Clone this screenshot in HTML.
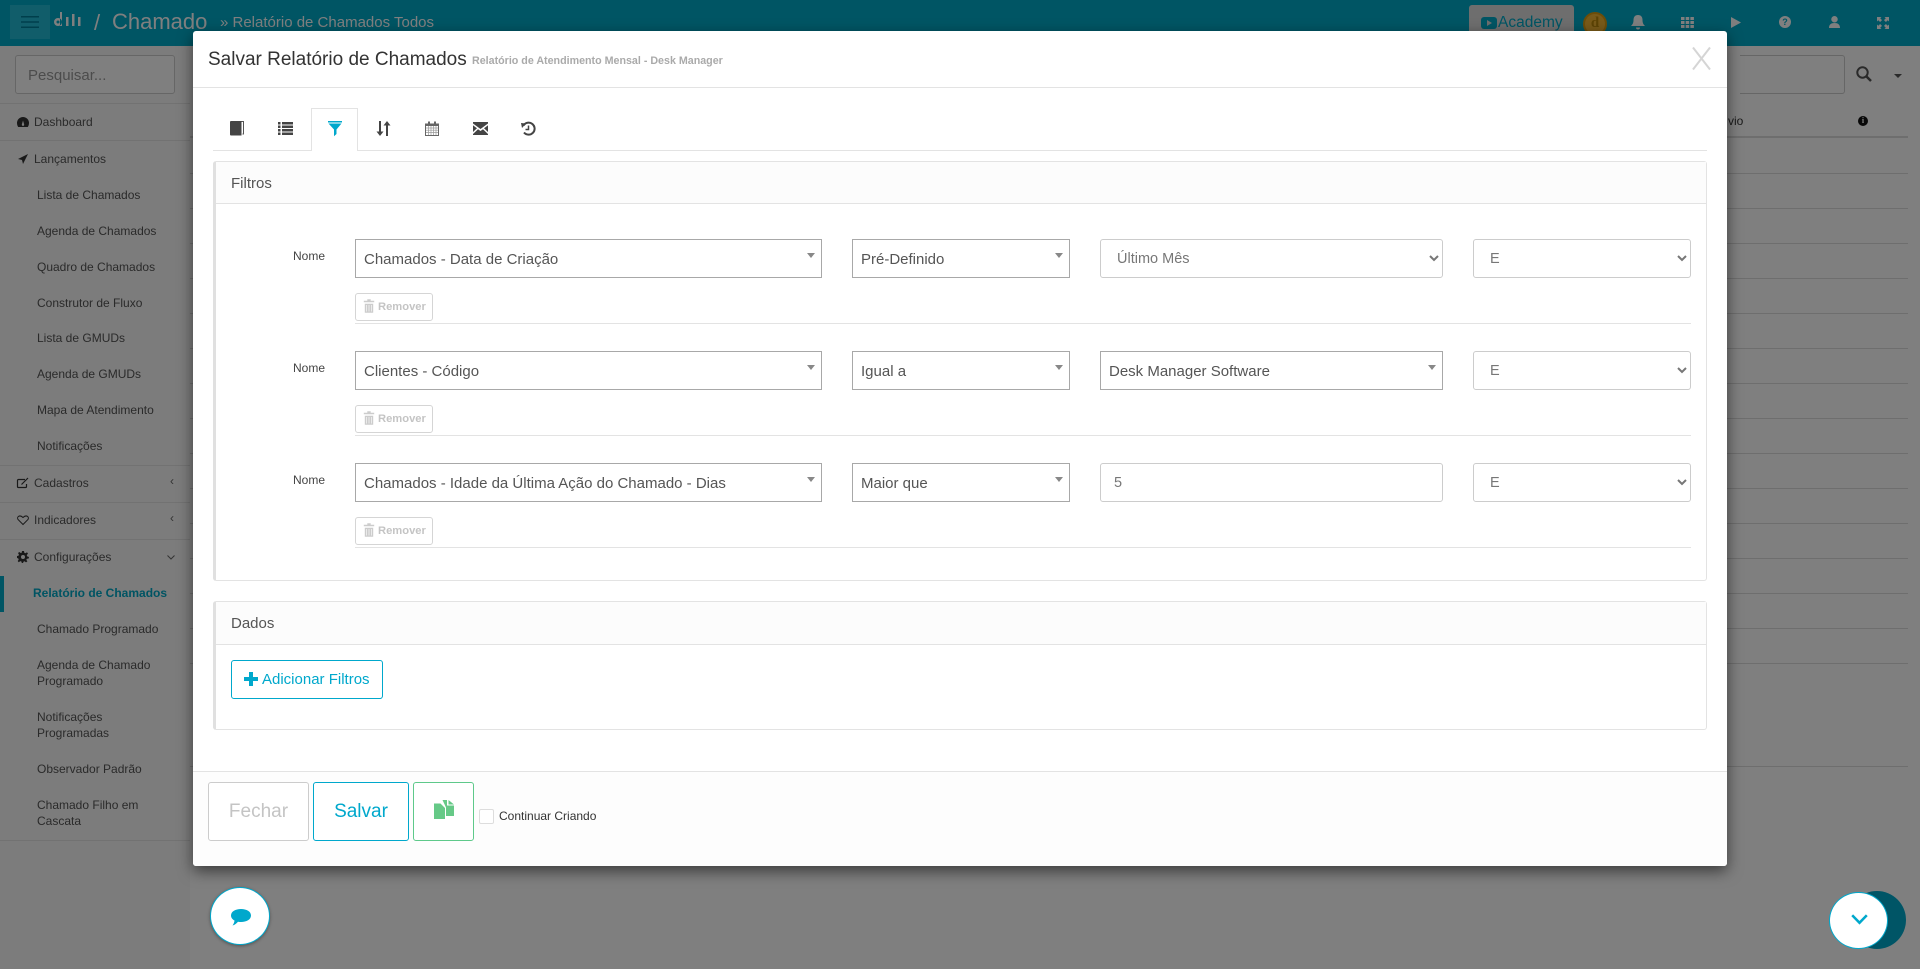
<!DOCTYPE html>
<html lang="pt-BR"><head><meta charset="utf-8"><title>Salvar Relatório de Chamados</title>
<style>
*{box-sizing:border-box}
html,body{margin:0;padding:0;width:1920px;height:969px;overflow:hidden;background:#fff;font-family:"Liberation Sans",sans-serif;color:#444}
.a{position:absolute}
svg{display:block;overflow:visible}
#hd{left:0;top:0;width:1920px;height:46px;background:#00abc9}
#side{left:0;top:46px;width:190px;height:923px;background:#f8f8f8}
.s{position:absolute;font-size:12px;line-height:16px;color:#555;white-space:nowrap}
.sub{left:37px}.top{left:34px}
.dv{position:absolute;left:0;width:190px;height:1px;background:#e4e4e4}
.rw{position:absolute;left:190px;width:1718px;height:1px;background:#ddd}
#ov{left:0;top:0;width:1920px;height:969px;background:rgba(0,0,0,.5)}
#m{left:193px;top:31px;width:1534px;height:835px;background:#fff;border-radius:3px;box-shadow:0 5px 15px rgba(0,0,0,.55)}
.ln{position:absolute;height:1px;background:#e3e3e3}
.pn{position:absolute;background:#fff;border:1px solid #e3e3e3;border-left:3px solid #e0e0e0;border-radius:3px}
.ph{position:absolute;left:0;top:0;right:0;height:42px;background:#fcfcfc;border-bottom:1px solid #e3e3e3;font-size:15px;line-height:43px;padding-left:15px;color:#555}
.nome{position:absolute;left:100px;font-size:12px;color:#444;line-height:16px}
.f{position:absolute;height:39px;background:#fff;border:1px solid #a8a8a8;font-size:15px;line-height:40px;color:#555;padding-left:8px;white-space:nowrap}
.f:after{content:"";position:absolute;right:6px;top:13px;border-left:4px solid transparent;border-right:4px solid transparent;border-top:5px solid #888}
select.n,.i{position:absolute;height:39px;background:#fff;border:1px solid #ccc;border-radius:3px;font:14.5px "Liberation Sans",sans-serif;color:#777}
select.n{padding-left:12px}
.i{padding-left:13px;line-height:37px}
.rm{position:absolute;left:162px;width:78px;height:28px;border:1px solid #d5d5d5;border-radius:3px;color:#c4c4c4;font-size:11.2px;font-weight:bold;line-height:27px;padding-left:22px;background:#fff}
.rm svg{position:absolute;left:7px;top:5px}
.b{position:absolute;top:751px;height:59px;border-radius:3px;background:#fff;font-size:19px;line-height:58px;text-align:center}
</style></head><body>

<div class="a" id="hd"></div>
<div class="a" style="left:10px;top:5px;width:40px;height:34px;background:#22bad5"></div>
<svg class="a" style="left:21px;top:15px" width="18" height="14"><path d="M0 1h18v1.500H0zM0 6.300h18v1.500H0zM0 11.500h18v1.500H0z" fill="#007e98"/></svg>
<svg class="a" style="left:54px;top:11px" width="28" height="20"><path d="M0 11a4 4 0 1 0 8 0a4 4 0 0 0-8 0zM2.500 11a1.500 1.500 0 1 1 3 0a1.500 1.500 0 0 1-3 0zM6 1h2v14H6zM12 6h2.500v9H12zM18 3h2.500v12H18zM24 6h2.500v9H24z" fill="#fff" fill-rule="evenodd"/></svg>
<div class="a" style="left:94px;top:9px;font-size:22px;line-height:28px;color:#fff">/</div>
<div class="a" style="left:112px;top:7px;font-size:22px;line-height:30px;color:#fff">Chamado</div>
<div class="a" style="left:220px;top:12px;font-size:15px;line-height:22px;color:#fff">» Relatório de Chamados Todos</div>
<div class="a" style="left:1469px;top:5px;width:105px;height:36px;background:#ddd;border-radius:3px 3px 0 0"></div>
<svg class="a" style="left:1481px;top:17px" width="16" height="12"><rect width="16" height="12" rx="3" fill="#00abc9"/><path d="M6 3l5 3l-5 3z" fill="#ddd"/></svg>
<div class="a" style="left:1498px;top:12px;font-size:15.5px;line-height:22px;color:#00abc9">Academy</div>
<div class="a" style="left:1583px;top:12px;width:24px;height:24px;border-radius:50%;background:#f0b432;border:2px solid #d99a10;color:#b8860b;font:bold 15px/19px 'Liberation Serif',serif;text-align:center">d</div>
<svg class="a" style="left:1631px;top:15px" width="14" height="15"><path d="M7 0c3 0 4.500 2 4.500 5c0 3 1 4.500 2.500 6H0c1.500-1.500 2.500-3 2.500-6C2.500 2 4 0 7 0zM5 12.500h4a2 2 0 0 1-4 0z" fill="#fff"/></svg>
<svg class="a" style="left:1681px;top:17px" width="13" height="11"><path d="M0 0h3.500v3H0zM4.700 0h3.500v3H4.700zM9.400 0h3.500v3H9.400zM0 4h3.500v3H0zM4.700 4h3.500v3H4.700zM9.400 4h3.500v3H9.400zM0 8h3.500v3H0zM4.700 8h3.500v3H4.700zM9.400 8h3.500v3H9.400z" fill="#fff"/></svg>
<svg class="a" style="left:1731px;top:17px" width="11" height="12"><path d="M0 0l10 5.500L0 11z" fill="#fff"/></svg>
<div class="a" style="left:1779px;top:16px;width:12px;height:12px;border-radius:50%;background:#fff;color:#00abc9;font:bold 9px/12px 'Liberation Sans',sans-serif;text-align:center">?</div>
<svg class="a" style="left:1829px;top:16px" width="11" height="13"><path d="M5.500 0a3.200 3.200 0 0 1 0 6.500a3.200 3.200 0 0 1 0-6.500zM0 12c0-3.500 2-5 5.500-5s5.500 1.500 5.500 5z" fill="#fff"/></svg>
<svg class="a" style="left:1877px;top:17px" width="12" height="12"><path d="M0 0h4.500L3.200 1.300L5 3.100L3.100 5L1.300 3.200L0 4.500zM12 0v4.500l-1.300-1.300L8.900 5L7 3.100l1.800-1.800L7.500 0zM0 12V7.500l1.300 1.300L3.100 7L5 8.900l-1.800 1.800L4.500 12zM12 12H7.500l1.300-1.300L7 8.900L8.900 7l1.800 1.800L12 7.500z" fill="#fff"/></svg>

<div class="a" id="side"></div>
<div class="a" style="left:15px;top:55px;width:160px;height:39px;background:#fff;border:1px solid #ccc;border-radius:3px;font-size:15px;line-height:39px;padding-left:12px;color:#999">Pesquisar...</div>
<div class="dv" style="top:103px"></div><div class="dv" style="top:140px"></div><div class="dv" style="top:465px"></div><div class="dv" style="top:502px"></div><div class="dv" style="top:539px"></div><div class="dv" style="top:840px"></div>
<svg class="a" style="left:17px;top:117px" width="12" height="10"><path d="M6 0a6 6 0 0 1 6 6c0 1.500-.5 3-1.200 4H1.200C.5 9 0 7.500 0 6a6 6 0 0 1 6-6zM6 3.500L5 7a1.200 1.200 0 1 0 2 0z" fill="#333" fill-rule="evenodd"/></svg>
<div class="s top" style="top:114px">Dashboard</div>
<svg class="a" style="left:18px;top:154px" width="10" height="10"><path d="M10 0L5 10L4 6L0 5z" fill="#333"/></svg>
<div class="s top" style="top:151px">Lançamentos</div>
<div class="s sub" style="top:187px">Lista de Chamados</div>
<div class="s sub" style="top:223px">Agenda de Chamados</div>
<div class="s sub" style="top:259px">Quadro de Chamados</div>
<div class="s sub" style="top:295px">Construtor de Fluxo</div>
<div class="s sub" style="top:330px">Lista de GMUDs</div>
<div class="s sub" style="top:366px">Agenda de GMUDs</div>
<div class="s sub" style="top:402px">Mapa de Atendimento</div>
<div class="s sub" style="top:438px">Notificações</div>
<svg class="a" style="left:17px;top:478px" width="12" height="10"><path d="M8 1.500H1.500a1 1 0 0 0-1 1v6a1 1 0 0 0 1 1h7a1 1 0 0 0 1-1V6M4.500 6.500L11 0" fill="none" stroke="#333" stroke-width="1.200"/></svg>
<div class="s top" style="top:475px">Cadastros</div>
<div class="s" style="left:170px;top:473px;color:#666">‹</div>
<svg class="a" style="left:17px;top:515px" width="12" height="10"><path d="M6 9.500L1 4.500C-.5 2 2.500-.8 6 2.500C9.500-.8 12.500 2 11 4.500z" fill="none" stroke="#333"/></svg>
<div class="s top" style="top:512px">Indicadores</div>
<div class="s" style="left:170px;top:510px;color:#666">‹</div>
<svg class="a" style="left:17px;top:551px" width="12" height="12"><path d="M5 0h2l.3 1.700l1.300.5L10 1.200L11 2.700l-1.200 1.200l.2 1.300L12 6l-.3 1.500l-1.800.2l-.6 1.200L10.400 10.300L9 11.400l-1.400-1.100l-1 .3L6 12H4.800l-.4-1.500l-1.200-.4L1.800 11.200L.7 10l1-1.400l-.5-1.200L0 7V5l1.500-.3l.4-1.200L1 2l1.400-1L3.700 2l1-.3zM6 4a2 2 0 1 0 0 4a2 2 0 0 0 0-4z" fill="#333" fill-rule="evenodd"/></svg>
<div class="s top" style="top:549px">Configurações</div>
<svg class="a" style="left:167px;top:555px" width="8" height="5"><path d="M.5.500L4 4L7.500.500" fill="none" stroke="#666"/></svg>
<div class="a" style="left:0;top:576px;width:4px;height:36px;background:#00abc9"></div>
<div class="s" style="left:33px;top:585px;font-weight:bold;color:#00a8c6">Relatório de Chamados</div>
<div class="s sub" style="top:621px">Chamado Programado</div>
<div class="s sub" style="top:657px">Agenda de Chamado<br>Programado</div>
<div class="s sub" style="top:709px">Notificações<br>Programadas</div>
<div class="s sub" style="top:761px">Observador Padrão</div>
<div class="s sub" style="top:797px">Chamado Filho em<br>Cascata</div>

<div class="a" style="left:1740px;top:55px;width:105px;height:39px;background:#fff;border:1px solid #ccc;border-radius:0 3px 3px 0;border-left:0"></div>
<svg class="a" style="left:1856px;top:66px" width="16" height="16"><circle cx="6.500" cy="6.500" r="5.200" fill="none" stroke="#555" stroke-width="2"/><path d="M10.500 10.500L15 15" stroke="#555" stroke-width="2.500"/></svg>
<div class="a" style="left:1894px;top:74px;border-left:4px solid transparent;border-right:4px solid transparent;border-top:4px solid #555"></div>
<div class="a" style="left:1728px;top:113px;font-size:12px;line-height:16px;font-weight:normal;color:#333">vio</div>
<div class="a" style="left:1858px;top:116px;width:10px;height:10px;border-radius:50%;background:#111;color:#fff;font:bold 8px/10px 'Liberation Serif',serif;text-align:center">i</div>
<div class="rw" style="top:136px;height:2px"></div>
<div class="rw" style="top:173px"></div><div class="rw" style="top:208px"></div><div class="rw" style="top:243px"></div><div class="rw" style="top:278px"></div><div class="rw" style="top:313px"></div><div class="rw" style="top:348px"></div><div class="rw" style="top:383px"></div><div class="rw" style="top:418px"></div><div class="rw" style="top:453px"></div><div class="rw" style="top:488px"></div><div class="rw" style="top:523px"></div><div class="rw" style="top:558px"></div><div class="rw" style="top:593px"></div><div class="rw" style="top:628px"></div><div class="rw" style="top:663px"></div><div class="rw" style="top:766px"></div>

<div class="a" id="ov"></div>

<div class="a" style="left:1848px;top:891px;width:58px;height:58px;border-radius:50%;background:#005566"></div>
<div class="a" style="left:1829px;top:892px;width:59px;height:57px;border-radius:50%;background:#fff;border:1px solid #00a8cc"></div>
<svg class="a" style="left:1851px;top:914px" width="17" height="11"><path d="M1.200 1.200L8.500 8.800l7.300-7.600" fill="none" stroke="#00a8cc" stroke-width="2.500"/></svg>
<div class="a" style="left:210px;top:887px;width:60px;height:58px;border-radius:50%;background:#fff;border:1px solid #00a8cc;box-shadow:0 1px 3px rgba(0,0,0,.35)"></div>
<svg class="a" style="left:231px;top:909px" width="20" height="17"><path d="M10 0c5.500 0 10 2.500 10 6.500S15.500 13 10 13c-1 0-2 0-3-.3C5.500 14.500 3.500 16 1.500 16.500c1-1.300 1.800-3 2-5C1.500 10.500 0 8.700 0 6.500C0 2.500 4.500 0 10 0z" fill="#00a8cc"/></svg>

<div class="a" id="m">
  <div class="a" style="left:15px;top:15px;font-size:19px;line-height:28px;color:#333;white-space:nowrap">Salvar Relatório de Chamados</div>
  <div class="a" style="left:279px;top:23px;font-size:10.7px;line-height:14px;font-weight:bold;color:#aaa;white-space:nowrap">Relatório de Atendimento Mensal - Desk Manager</div>
  <svg class="a" style="left:1499px;top:16px" width="19" height="23"><path d="M1 0.500L18 22.500M18 0.500L1 22.500" stroke="#d5d5d5" stroke-width="2" fill="none"/></svg>
  <div class="ln" style="left:0;right:0;top:56px"></div>

  <div class="ln" style="left:20px;width:1494px;top:119px"></div>
  <div class="a" style="left:118px;top:77px;width:47px;height:43px;background:#fff;border:1px solid #e3e3e3;border-bottom:0"></div>
  <svg class="a" style="left:37px;top:90px" width="14" height="15"><path d="M2 .5h11.500V13h-1" fill="none" stroke="#555"/><path d="M1 0h10.500v14.500H1a1 1 0 0 1-1-1V1a1 1 0 0 1 1-1z" fill="#444"/></svg>
  <svg class="a" style="left:85px;top:91px" width="15" height="13"><path d="M0 0h2.500v2.500H0zM4 0h11v2.500H4zM0 3.500h2.500V6H0zM4 3.500h11V6H4zM0 7h2.500v2.500H0zM4 7h11v2.500H4zM0 10.500h2.500V13H0zM4 10.500h11V13H4z" fill="#444"/></svg>
  <svg class="a" style="left:135px;top:90px" width="14" height="15"><path d="M0 0h14v1.500H0zM.5 2.500h13L8.500 8.500V13L6 15.200V8.500z" fill="#00a8cc"/></svg>
  <svg class="a" style="left:183px;top:90px" width="15" height="15"><path d="M3 0h2v10.500h2.500L4 15L.5 10.500H3zM11 0l3.500 4.500H12V15H10V4.500H7.500z" fill="#444"/></svg>
  <svg class="a" style="left:232px;top:90px" width="14" height="15"><path d="M.5 3h13v11.500H.5z" fill="none" stroke="#666"/><path d="M0 2.500h14v2.500H0zM3 .5h2v3H3zM9 .5h2v3H9z" fill="#666"/><path d="M1 7h12M1 9.200h12M1 11.500h12M3.500 5v9M6 5v9M8.500 5v9M11 5v9" stroke="#999" stroke-width=".7"/></svg>
  <svg class="a" style="left:280px;top:91px" width="15" height="13"><path d="M0 0h15v1.500L7.500 7L0 1.500zM0 3.300L4 6.300L0 10zM15 3.300L11 6.300L15 10zM5 7.200L7.500 9L10 7.200L15 12v1H0v-1z" fill="#444"/></svg>
  <svg class="a" style="left:328px;top:91px" width="14" height="14"><path d="M2.500 3.500A6 6 0 1 1 3 10.500" fill="none" stroke="#444" stroke-width="2"/><path d="M0 1l5 .5L1 6z" fill="#444"/><path d="M7.500 3.500V7.500H4.500" fill="none" stroke="#444" stroke-width="1.500"/></svg>

  <div class="pn" style="left:20px;top:130px;width:1494px;height:420px">
    <div class="ph">Filtros</div>
    <div class="nome" style="top:86px;left:77px">Nome</div>
    <div class="f" style="left:139px;top:77px;width:467px">Chamados - Data de Criação</div>
    <div class="f" style="left:636px;top:77px;width:218px">Pré-Definido</div>
    <select class="n" style="left:884px;top:77px;width:343px"><option>Último Mês</option></select>
    <select class="n" style="left:1257px;top:77px;width:218px"><option>E</option></select>
    <div class="rm" style="left:139px;top:131px"><svg width="12" height="14"><path d="M4 0h4v1.500h3.500v2H.5v-2H4zM1.500 4.500h9V14h-9zM3.500 6v6.500M6 6v6.500M8.500 6v6.500" fill="#ccc" stroke="#fff" stroke-width=".6"/></svg>Remover</div>
    <div class="ln" style="left:139px;width:1336px;top:161px"></div>

    <div class="nome" style="top:198px;left:77px">Nome</div>
    <div class="f" style="left:139px;top:189px;width:467px">Clientes - Código</div>
    <div class="f" style="left:636px;top:189px;width:218px">Igual a</div>
    <div class="f" style="left:884px;top:189px;width:343px">Desk Manager Software</div>
    <select class="n" style="left:1257px;top:189px;width:218px"><option>E</option></select>
    <div class="rm" style="left:139px;top:243px"><svg width="12" height="14"><path d="M4 0h4v1.500h3.500v2H.5v-2H4zM1.500 4.500h9V14h-9zM3.500 6v6.500M6 6v6.500M8.500 6v6.500" fill="#ccc" stroke="#fff" stroke-width=".6"/></svg>Remover</div>
    <div class="ln" style="left:139px;width:1336px;top:273px"></div>

    <div class="nome" style="top:310px;left:77px">Nome</div>
    <div class="f" style="left:139px;top:301px;width:467px">Chamados - Idade da Última Ação do Chamado - Dias</div>
    <div class="f" style="left:636px;top:301px;width:218px">Maior que</div>
    <div class="i" style="left:884px;top:301px;width:343px;line-height:38px">5</div>
    <select class="n" style="left:1257px;top:301px;width:218px"><option>E</option></select>
    <div class="rm" style="left:139px;top:355px"><svg width="12" height="14"><path d="M4 0h4v1.500h3.500v2H.5v-2H4zM1.500 4.500h9V14h-9zM3.500 6v6.500M6 6v6.500M8.500 6v6.500" fill="#ccc" stroke="#fff" stroke-width=".6"/></svg>Remover</div>
    <div class="ln" style="left:139px;width:1336px;top:385px"></div>
  </div>

  <div class="pn" style="left:20px;top:570px;width:1494px;height:129px">
    <div class="ph" style="height:43px;line-height:44px">Dados</div>
    <div class="a" style="left:15px;top:58px;width:152px;height:39px;border:1px solid #00a8cc;border-radius:3px;color:#00a8cc;font-size:15px;line-height:37px;padding-left:30px;white-space:nowrap">Adicionar Filtros
      <svg class="a" style="left:12px;top:11px" width="14" height="14"><path d="M5 0h4v5h5v4H9v5H5V9H0V5h5z" fill="#00a8cc"/></svg>
    </div>
  </div>

  <div class="ln" style="left:0;right:0;top:740px"></div>
  <div class="a" style="left:0;right:0;top:741px;height:94px;background:#fdfdfd;border-radius:0 0 3px 3px"></div>
  <div class="b" style="left:15px;width:101px;border:1px solid #ccc;color:#c4c4c4">Fechar</div>
  <div class="b" style="left:120px;width:96px;border:1px solid #00a8cc;color:#00a8cc">Salvar</div>
  <div class="b" style="left:220px;width:61px;border:1px solid #5ec98a"></div>
  <svg class="a" style="left:241px;top:769px" width="20" height="19"><path d="M0 3.500h6.500L11 8V19H0zM8.500 0H13v5.500h7V16h-8V7.500zM14.500 0L20 4.500h-5.500z" fill="#66c987"/></svg>
  <div class="a" style="left:286px;top:778px;width:15px;height:15px;background:#fff;border:1px solid #ddd;border-radius:2px"></div>
  <div class="a" style="left:306px;top:777px;font-size:12px;line-height:16px;color:#333;white-space:nowrap">Continuar Criando</div>
</div>
</body></html>
